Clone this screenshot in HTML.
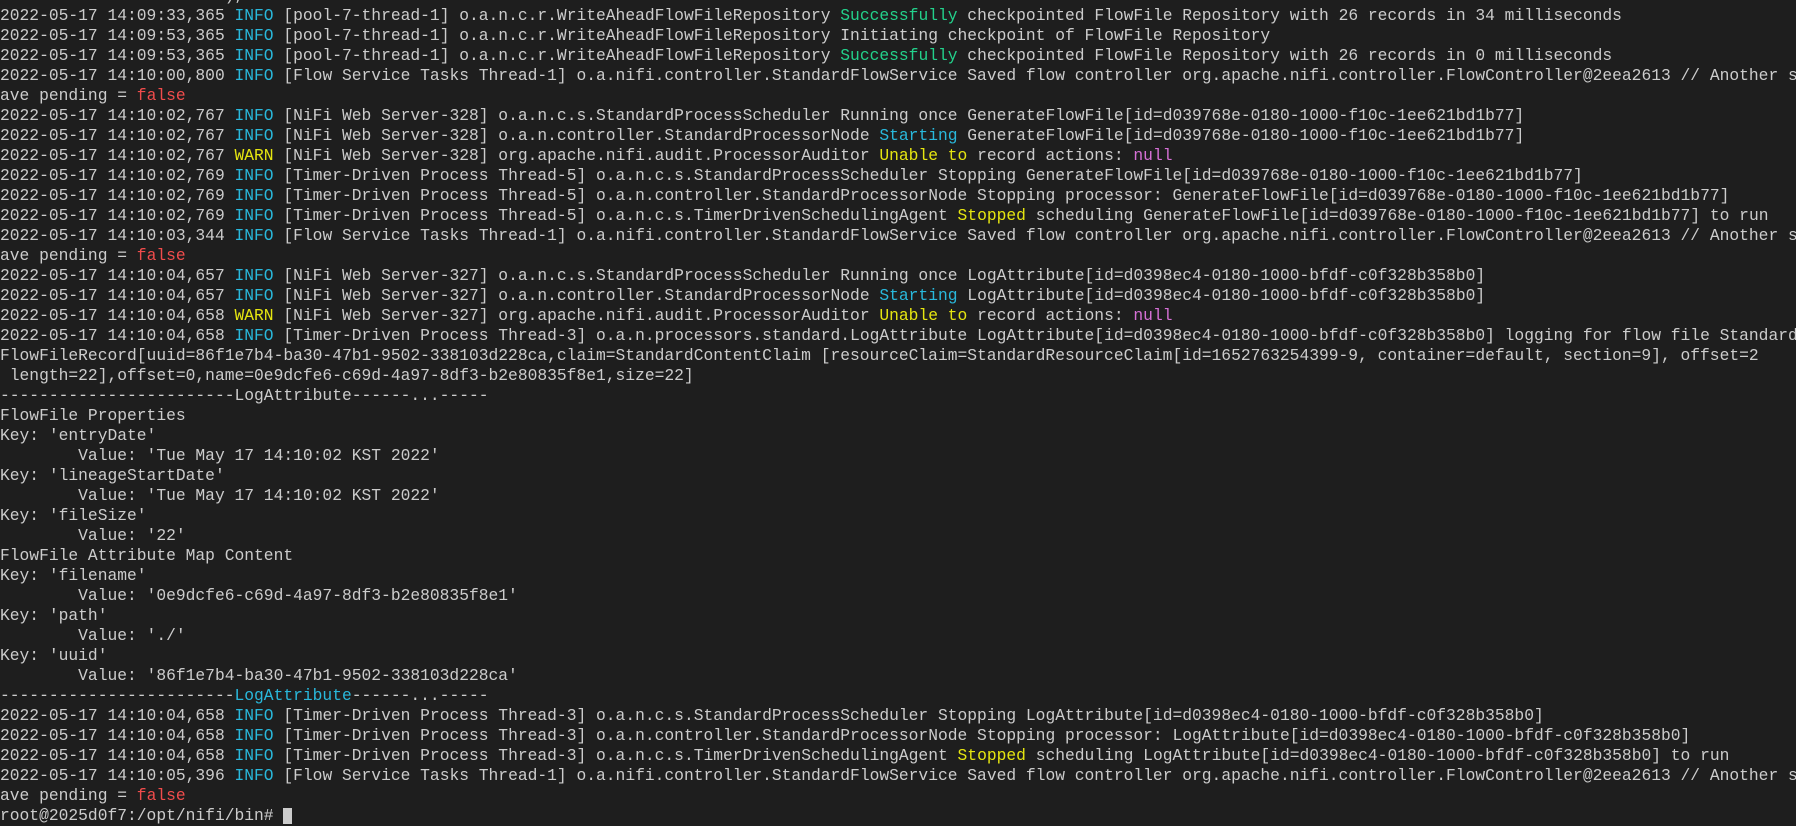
<!DOCTYPE html>
<html><head><meta charset="utf-8"><style>
html,body{margin:0;padding:0;background:#1e1e1e;width:1796px;height:811px;overflow:hidden}
#t{position:absolute;left:0;top:-14px;width:1796px;overflow:hidden;font-family:"Liberation Mono","DejaVu Sans Mono",monospace;font-size:16.3px;color:#cccccc}
#t div{height:20px;line-height:20px;white-space:pre;overflow:hidden}
.i{color:#29b8db}.w{color:#e5e510}.g{color:#23d18b}.r{color:#f14c4c}.m{color:#d670d6}.y{color:#e5e510}.c{color:#29b8db}
.cur{display:inline-block;width:9px;height:16px;background:#cccccc;vertical-align:middle}
</style></head><body><div id="t"><div>ents in 12 milliseconds), max Transaction ID 11191</div><div>2022-05-17 14:09:33,365 <span class="i">INFO</span> [pool-7-thread-1] o.a.n.c.r.WriteAheadFlowFileRepository <span class="g">Successfully</span> checkpointed FlowFile Repository with 26 records in 34 milliseconds</div><div>2022-05-17 14:09:53,365 <span class="i">INFO</span> [pool-7-thread-1] o.a.n.c.r.WriteAheadFlowFileRepository Initiating checkpoint of FlowFile Repository</div><div>2022-05-17 14:09:53,365 <span class="i">INFO</span> [pool-7-thread-1] o.a.n.c.r.WriteAheadFlowFileRepository <span class="g">Successfully</span> checkpointed FlowFile Repository with 26 records in 0 milliseconds</div><div>2022-05-17 14:10:00,800 <span class="i">INFO</span> [Flow Service Tasks Thread-1] o.a.nifi.controller.StandardFlowService Saved flow controller org.apache.nifi.controller.FlowController@2eea2613 // Another save pending = false</div><div>ave pending = <span class="r">false</span></div><div>2022-05-17 14:10:02,767 <span class="i">INFO</span> [NiFi Web Server-328] o.a.n.c.s.StandardProcessScheduler Running once GenerateFlowFile[id=d039768e-0180-1000-f10c-1ee621bd1b77]</div><div>2022-05-17 14:10:02,767 <span class="i">INFO</span> [NiFi Web Server-328] o.a.n.controller.StandardProcessorNode <span class="c">Starting</span> GenerateFlowFile[id=d039768e-0180-1000-f10c-1ee621bd1b77]</div><div>2022-05-17 14:10:02,767 <span class="w">WARN</span> [NiFi Web Server-328] org.apache.nifi.audit.ProcessorAuditor <span class="y">Unable to</span> record actions: <span class="m">null</span></div><div>2022-05-17 14:10:02,769 <span class="i">INFO</span> [Timer-Driven Process Thread-5] o.a.n.c.s.StandardProcessScheduler Stopping GenerateFlowFile[id=d039768e-0180-1000-f10c-1ee621bd1b77]</div><div>2022-05-17 14:10:02,769 <span class="i">INFO</span> [Timer-Driven Process Thread-5] o.a.n.controller.StandardProcessorNode Stopping processor: GenerateFlowFile[id=d039768e-0180-1000-f10c-1ee621bd1b77]</div><div>2022-05-17 14:10:02,769 <span class="i">INFO</span> [Timer-Driven Process Thread-5] o.a.n.c.s.TimerDrivenSchedulingAgent <span class="y">Stopped</span> scheduling GenerateFlowFile[id=d039768e-0180-1000-f10c-1ee621bd1b77] to run</div><div>2022-05-17 14:10:03,344 <span class="i">INFO</span> [Flow Service Tasks Thread-1] o.a.nifi.controller.StandardFlowService Saved flow controller org.apache.nifi.controller.FlowController@2eea2613 // Another save pending = false</div><div>ave pending = <span class="r">false</span></div><div>2022-05-17 14:10:04,657 <span class="i">INFO</span> [NiFi Web Server-327] o.a.n.c.s.StandardProcessScheduler Running once LogAttribute[id=d0398ec4-0180-1000-bfdf-c0f328b358b0]</div><div>2022-05-17 14:10:04,657 <span class="i">INFO</span> [NiFi Web Server-327] o.a.n.controller.StandardProcessorNode <span class="c">Starting</span> LogAttribute[id=d0398ec4-0180-1000-bfdf-c0f328b358b0]</div><div>2022-05-17 14:10:04,658 <span class="w">WARN</span> [NiFi Web Server-327] org.apache.nifi.audit.ProcessorAuditor <span class="y">Unable to</span> record actions: <span class="m">null</span></div><div>2022-05-17 14:10:04,658 <span class="i">INFO</span> [Timer-Driven Process Thread-3] o.a.n.processors.standard.LogAttribute LogAttribute[id=d0398ec4-0180-1000-bfdf-c0f328b358b0] logging for flow file StandardFlowFileRecord</div><div>FlowFileRecord[uuid=86f1e7b4-ba30-47b1-9502-338103d228ca,claim=StandardContentClaim [resourceClaim=StandardResourceClaim[id=1652763254399-9, container=default, section=9], offset=2</div><div> length=22],offset=0,name=0e9dcfe6-c69d-4a97-8df3-b2e80835f8e1,size=22]</div><div>------------------------LogAttribute------...-----</div><div>FlowFile Properties</div><div>Key: 'entryDate'</div><div>        Value: 'Tue May 17 14:10:02 KST 2022'</div><div>Key: 'lineageStartDate'</div><div>        Value: 'Tue May 17 14:10:02 KST 2022'</div><div>Key: 'fileSize'</div><div>        Value: '22'</div><div>FlowFile Attribute Map Content</div><div>Key: 'filename'</div><div>        Value: '0e9dcfe6-c69d-4a97-8df3-b2e80835f8e1'</div><div>Key: 'path'</div><div>        Value: './'</div><div>Key: 'uuid'</div><div>        Value: '86f1e7b4-ba30-47b1-9502-338103d228ca'</div><div>------------------------<span class="c">LogAttribute</span>------...-----</div><div>2022-05-17 14:10:04,658 <span class="i">INFO</span> [Timer-Driven Process Thread-3] o.a.n.c.s.StandardProcessScheduler Stopping LogAttribute[id=d0398ec4-0180-1000-bfdf-c0f328b358b0]</div><div>2022-05-17 14:10:04,658 <span class="i">INFO</span> [Timer-Driven Process Thread-3] o.a.n.controller.StandardProcessorNode Stopping processor: LogAttribute[id=d0398ec4-0180-1000-bfdf-c0f328b358b0]</div><div>2022-05-17 14:10:04,658 <span class="i">INFO</span> [Timer-Driven Process Thread-3] o.a.n.c.s.TimerDrivenSchedulingAgent <span class="y">Stopped</span> scheduling LogAttribute[id=d0398ec4-0180-1000-bfdf-c0f328b358b0] to run</div><div>2022-05-17 14:10:05,396 <span class="i">INFO</span> [Flow Service Tasks Thread-1] o.a.nifi.controller.StandardFlowService Saved flow controller org.apache.nifi.controller.FlowController@2eea2613 // Another save pending = false</div><div>ave pending = <span class="r">false</span></div><div>root@2025d0f7:/opt/nifi/bin# <span class="cur"></span></div></div></body></html>
